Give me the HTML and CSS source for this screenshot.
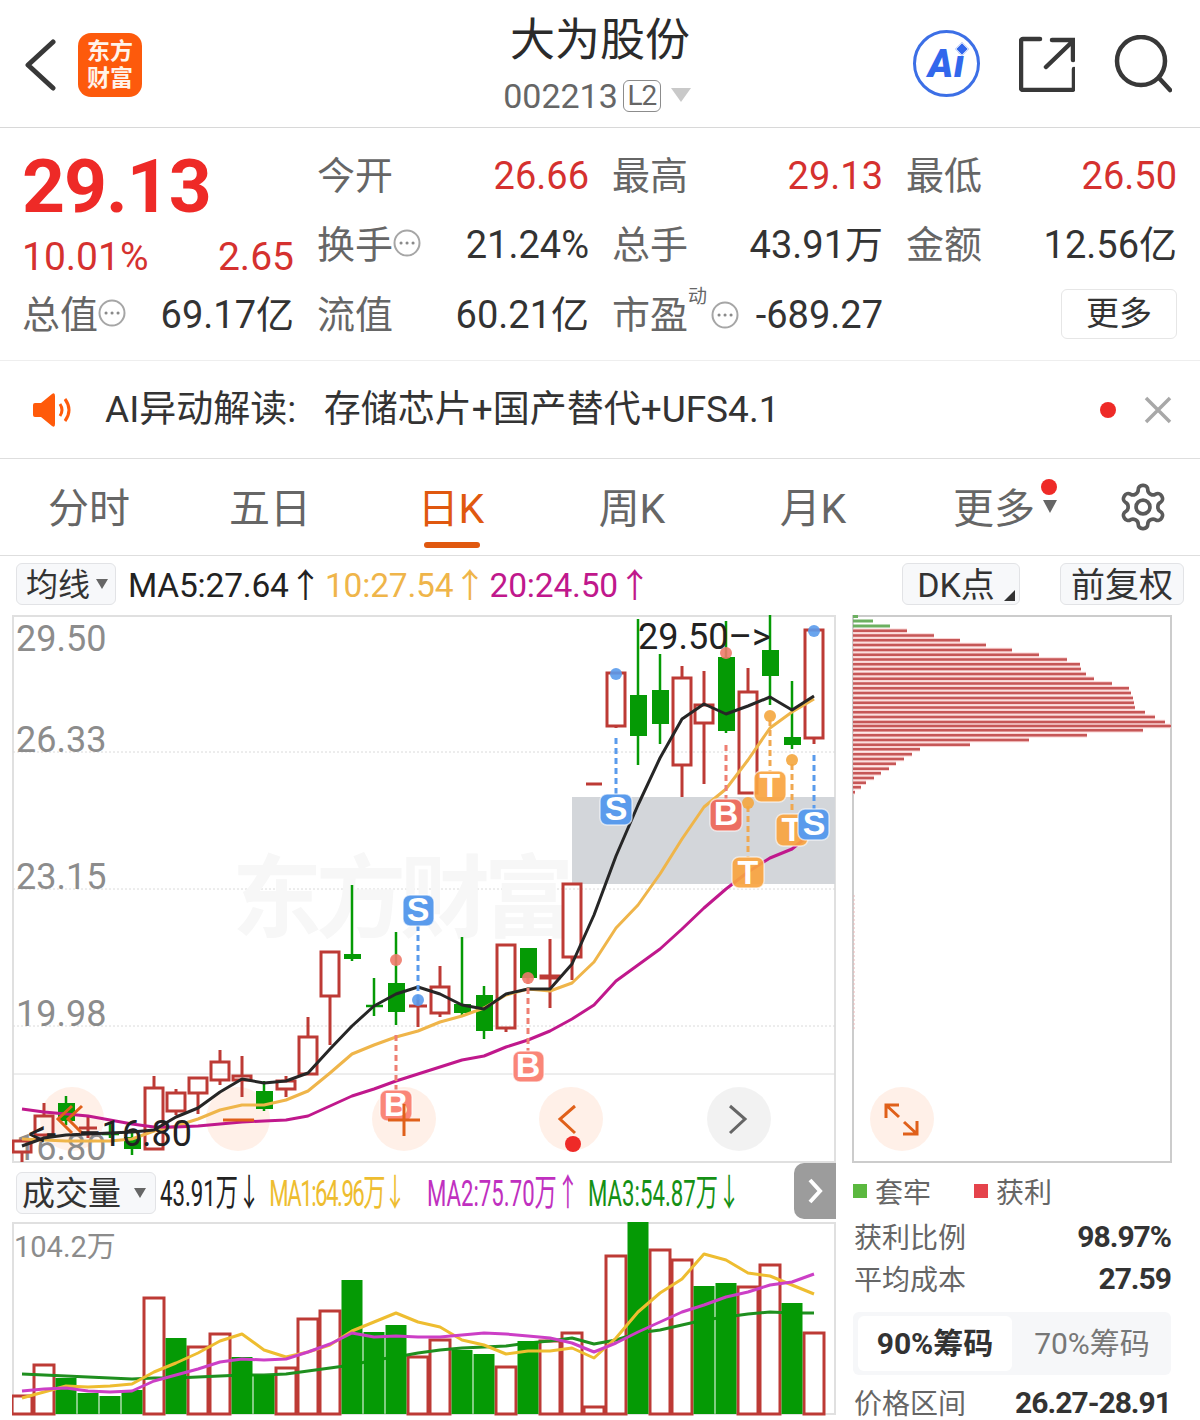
FILE: index.html
```html
<!DOCTYPE html>
<html lang="zh-CN">
<head>
    <meta charset="UTF-8">
    <meta name="viewport" content="width=device-width, initial-scale=1.0">
    <title>大为股份 002213</title>
    <link rel="stylesheet" href="styles.css">
</head>
<body>
    <header class="top-bar">
        <div class="top-left">
            <svg class="back-icon" viewBox="0 0 32 52"><path d="M29 3 L4 26 L29 49"/></svg>
            <div class="logo"><span>东方</span><span>财富</span></div>
        </div>
        <div class="top-title">
            <h1>大为股份</h1>
            <div class="top-code">002213<span class="l2-tag">L2</span><span class="tri-code"></span></div>
        </div>
        <div class="top-right">
            <div class="ai-btn"><span>Ai</span><i></i></div>
            <svg class="top-icon share" viewBox="0 0 56 56"><path d="M21 3H4a2 2 0 0 0-2 2v47a2 2 0 0 0 2 2h49a2 2 0 0 0 2-2V33M27 31 54 5M33 4H54V24"/></svg>
            <svg class="top-icon search" viewBox="0 0 58 58"><circle cx="27" cy="26" r="24"/><path d="M45 43 56 55"/></svg>
        </div>
    </header>

    <section class="stats">
        <div class="quote">
            <div class="price">29.13</div>
            <div class="change"><span>10.01%</span><span>2.65</span></div>
        </div>
        <div class="stat"><span class="lbl">今开</span><span class="val red">26.66</span></div>
        <div class="stat"><span class="lbl">最高</span><span class="val red">29.13</span></div>
        <div class="stat"><span class="lbl">最低</span><span class="val red">26.50</span></div>
        <div class="stat"><span class="lbl">换手<svg class="more-dot" viewBox="0 0 28 28"><circle cx="14" cy="14" r="12.5"/><path d="M8 14h.1M14 14h.1M20 14h.1"/></svg></span><span class="val">21.24%</span></div>
        <div class="stat"><span class="lbl">总手</span><span class="val">43.91万</span></div>
        <div class="stat"><span class="lbl">金额</span><span class="val">12.56亿</span></div>
        <div class="stat"><span class="lbl">总值<svg class="more-dot" viewBox="0 0 28 28"><circle cx="14" cy="14" r="12.5"/><path d="M8 14h.1M14 14h.1M20 14h.1"/></svg></span><span class="val">69.17亿</span></div>
        <div class="stat"><span class="lbl">流值</span><span class="val">60.21亿</span></div>
        <div class="stat"><span class="lbl">市盈<sup>动</sup><svg class="more-dot pe-dot" viewBox="0 0 28 28"><circle cx="14" cy="14" r="12.5"/><path d="M8 14h.1M14 14h.1M20 14h.1"/></svg></span><span class="val">-689.27</span></div>
        <div class="stat stat-end"><button class="more-btn">更多</button></div>
    </section>

    <section class="notice">
        <svg class="speaker" viewBox="0 0 42 34"><path class="cone" d="M1 12q0-2 2-2h6L20 1q3-2 3 2v28q0 4-3 2L9 24H3q-2 0-2-2z"/><path class="wave" d="M28 11q4 6 0 12M33 6q8 11 0 22"/></svg>
        <span class="notice-text">AI异动解读:&nbsp;&nbsp; 存储芯片+国产替代+UFS4.1</span>
        <i class="notice-dot"></i>
        <svg class="close" viewBox="0 0 28 28"><path d="M2 2 26 26M26 2 2 26"/></svg>
    </section>

    <nav class="tabs">
        <a>分时</a>
        <a>五日</a>
        <a class="active">日K</a>
        <a>周K</a>
        <a>月K</a>
        <a class="tab-more">更多<i class="tab-dot"></i><i class="tab-tri"></i></a>
        <svg class="gear" viewBox="0 0 24 24"><path d="M12.22 2h-.44a2 2 0 0 0-2 2v.18a2 2 0 0 1-1 1.73l-.43.25a2 2 0 0 1-2 0l-.15-.08a2 2 0 0 0-2.73.73l-.22.38a2 2 0 0 0 .73 2.73l.15.1a2 2 0 0 1 1 1.72v.51a2 2 0 0 1-1 1.74l-.15.09a2 2 0 0 0-.73 2.73l.22.38a2 2 0 0 0 2.73.73l.15-.08a2 2 0 0 1 2 0l.43.25a2 2 0 0 1 1 1.73V20a2 2 0 0 0 2 2h.44a2 2 0 0 0 2-2v-.18a2 2 0 0 1 1-1.73l.43-.25a2 2 0 0 1 2 0l.15.08a2 2 0 0 0 2.73-.73l.22-.39a2 2 0 0 0-.73-2.73l-.15-.08a2 2 0 0 1-1-1.74v-.5a2 2 0 0 1 1-1.74l.15-.09a2 2 0 0 0 .73-2.73l-.22-.38a2 2 0 0 0-2.73-.73l-.15.08a2 2 0 0 1-2 0l-.43-.25a2 2 0 0 1-1-1.73V4a2 2 0 0 0-2-2z"/><circle cx="12" cy="12" r="3.2"/></svg>
    </nav>

    <section class="ma-bar">
        <div class="pill pill-ma">均线<i class="tri-small"></i></div>
        <span class="ma-item c-black">MA5:27.64↑</span>
        <span class="ma-item c-yellow">10:27.54↑</span>
        <span class="ma-item c-pink">20:24.50↑</span>
        <div class="pill pill-dk">DK点<i class="corner"></i></div>
        <div class="pill pill-fq">前复权</div>
    </section>

    <main class="charts">
        <div class="chart-col">
            <svg class="kline" viewBox="12 615 824 548">
                <rect class="frame" x="13" y="616" width="822" height="546"/>
                <path class="grid-dot" d="M13 752H835M13 889H835M13 1026H835"/>
                <path class="grid-solid" d="M13 1074H835"/>
                <text class="watermark" x="232" y="930">东方财富</text>
                <rect class="zone" x="572" y="797" width="263" height="87"/>

                <circle class="round-btn" cx="72" cy="1119" r="32"/>
                <circle class="round-btn" cx="238" cy="1119" r="32"/>
                <circle class="round-btn" cx="404" cy="1119" r="32"/>
                <circle class="round-btn" cx="571" cy="1119" r="32"/>
                <circle class="round-btn grey" cx="739" cy="1119" r="32"/>

                <text class="axis" x="16" y="651">29.50</text>
                <text class="axis" x="16" y="752">26.33</text>
                <text class="axis" x="16" y="889">23.15</text>
                <text class="axis" x="16" y="1026">19.98</text>
                <text class="axis" x="16" y="1160">16.80</text>

                <!-- up candles -->
                <path class="up" d="M13 1141h18v11h-18zM22 1152v10M35 1116h18v19h-18zM44 1103v13M79 1128h18M88 1117v21M145 1088h18v61h-18zM154 1076v12M167 1093h18v18h-18zM176 1089v4M176 1111v4M189 1078h18v15h-18zM198 1093v21M211 1062h18v18h-18zM220 1050v12M220 1080v5M233 1076h18v4h-18zM242 1056v20M242 1080v17M277 1081h18v8h-18zM286 1076v5M286 1089v8M299 1037h18v37h-18zM308 1017v20M321 952h18v44h-18zM330 996v49M409 1006h18M418 999v28M431 987h18v26h-18zM440 966v21M440 1013v4M497 945h18v83h-18zM506 1028v4M541 976h18v2h-18zM550 939v69M563 884h18v73h-18zM572 957v23M586 784h16M607 673h18v53h-18zM616 726v2M673 678h18v87h-18zM682 666v12M682 765v32M695 705h18v18h-18zM704 671v34M704 723v61M739 692h18v101h-18zM748 668v24M805 630h18v108h-18zM814 738v6"/>
                <!-- down candles -->
                <path class="down-wick" d="M66 1096v29M110 1124v14M102 1134h17M132 1131v24M264 1081v30M352 885v76M374 978v38M366 1006h17M396 932v93M462 937v78M484 986v53M638 619v146M660 654v90M726 621v112M770 615v90M792 681v68"/>
                <path class="down" d="M58 1103h17v18h-17zM124 1137h17v12h-17zM256 1091h17v18h-17zM344 954h17v5h-17zM388 983h17v29h-17zM454 1004h17v9h-17zM476 995h17v36h-17zM520 948h17v30h-17zM630 695h17v41h-17zM652 690h17v34h-17zM718 657h17v74h-17zM762 650h17v26h-17zM784 737h17v8h-17z"/>

                <polyline class="ma ma10" points="22,1139 44,1140 66,1141 88,1141 110,1141 132,1139 154,1131 176,1126 198,1119 220,1110 242,1105 264,1105 286,1100 308,1091 330,1073 352,1054 374,1045 396,1037 418,1031 440,1022 462,1016 484,1008 506,995 528,989 550,991 572,983 594,962 616,928 638,905 660,874 682,839 704,807 726,789 748,760 770,728 792,712 814,699"/>
                <polyline class="ma ma20" points="22,1109 44,1112 66,1114 88,1116 110,1120 132,1124 154,1127 176,1127 198,1126 220,1124 242,1122 264,1121 286,1120 308,1116 330,1106 352,1096 374,1089 396,1081 418,1074 440,1067 462,1060 484,1056 506,1047 528,1040 550,1031 572,1019 594,1005 616,981 638,965 660,949 682,929 704,908 726,889 748,872 770,858 792,849 814,831"/>
                <polyline class="ma ma5" points="22,1146 44,1138 66,1135 88,1134 110,1133 132,1132 154,1130 176,1117 198,1108 220,1092 242,1079 264,1083 286,1081 308,1073 330,1049 352,1026 374,1006 396,994 418,987 440,994 462,1005 484,1009 506,994 528,989 550,989 572,964 594,915 616,856 638,805 660,758 682,719 704,704 726,714 748,706 770,697 792,710 814,696"/>

                <path class="dash c-s" d="M418 925V1000M616 738V795M814 755V810"/>
                <path class="dash c-b" d="M396 1035V1090M528 978V1052M726 745V800"/>
                <path class="dash c-t" d="M748 806V858M770 720V772M792 764V815"/>
                <circle class="dot d-b" cx="396" cy="960" r="6"/>
                <circle class="dot d-s" cx="418" cy="1000" r="6"/>
                <circle class="dot d-b" cx="528" cy="978" r="6"/>
                <circle class="dot d-s" cx="616" cy="674" r="6"/>
                <circle class="dot d-b" cx="726" cy="653" r="6"/>
                <circle class="dot d-t" cx="748" cy="803" r="6"/>
                <circle class="dot d-t" cx="770" cy="716" r="6"/>
                <circle class="dot d-t" cx="792" cy="760" r="6"/>
                <circle class="dot d-s" cx="814" cy="631" r="6"/>

                <g class="tag tag-s"><rect x="403" y="895" width="31" height="31" rx="7"/><text x="418" y="921">S</text></g>
                <g class="tag tag-b"><rect x="380" y="1090" width="32" height="31" rx="7"/><text x="396" y="1116">B</text></g>
                <g class="tag tag-b"><rect x="513" y="1051" width="31" height="31" rx="7"/><text x="528" y="1077">B</text></g>
                <g class="tag tag-s"><rect x="600" y="794" width="32" height="31" rx="7"/><text x="616" y="820">S</text></g>
                <g class="tag tag-b dark"><rect x="710" y="799" width="32" height="32" rx="7"/><text x="726" y="825">B</text></g>
                <g class="tag tag-t"><rect x="754" y="771" width="32" height="31" rx="7"/><text x="770" y="797">T</text></g>
                <g class="tag tag-t"><rect x="776" y="814" width="32" height="32" rx="7"/><text x="792" y="841">T</text></g>
                <g class="tag tag-s"><rect x="798" y="809" width="31" height="31" rx="7"/><text x="814" y="835">S</text></g>
                <g class="tag tag-t"><rect x="732" y="857" width="32" height="31" rx="7"/><text x="748" y="884">T</text></g>

                <path class="btn-ic" d="M82 1106 68 1119 82 1133M72 1106 58 1119 72 1133M223 1120H254M388 1120H420M404 1104V1136M575 1106 560 1119 575 1133"/>
                <path class="btn-ic grey" d="M730 1106 745 1119 730 1133"/>
                <circle class="red-dot" cx="573" cy="1144" r="8"/>

                <text class="mark" x="638" y="649">29.50–&gt;</text>
                <text class="mark" x="28" y="1146">&lt;-</text>
                <text class="mark end" x="192" y="1146">–16.80</text>
            </svg>

            <div class="vol-bar">
                <div class="pill pill-vol">成交量<i class="tri-small"></i></div>
                <div class="vol-values">
                    <span class="c-black">43.91万↓</span>
                    <span class="c-gold">MA1:64.96万↓</span>
                    <span class="c-purple">MA2:75.70万↑</span>
                    <span class="c-green">MA3:54.87万↓</span>
                </div>
                <div class="vol-next"><svg viewBox="0 0 16 28"><path d="M3 3 13 14 3 25"/></svg></div>
            </div>

            <svg class="volume" viewBox="12 1222 824 194">
                <rect class="frame" x="13" y="1223" width="822" height="191"/>
                <text class="vol-max" x="14" y="1257">104.2万</text>
                <path class="up" d="M12 1414V1396H32V1414zM34 1414V1365H54V1414zM144 1414V1298H164V1414zM188 1414V1347H208V1414zM210 1414V1334H230V1414zM276 1414V1368H296V1414zM298 1414V1319H318V1414zM320 1414V1311H340V1414zM408 1414V1357H428V1414zM430 1414V1340H450V1414zM496 1414V1367H516V1414zM540 1414V1341H560V1414zM562 1414V1333H582V1414zM584 1414V1407H604V1414zM606 1414V1256H626V1414zM650 1414V1250H670V1414zM672 1414V1260H692V1414zM738 1414V1287H758V1414zM760 1414V1265H780V1414zM804 1414V1333H824V1414z"/>
                <polyline class="vma vma3" points="22,1374 44,1375 66,1376 88,1377 110,1378 132,1379 154,1378 176,1378 198,1377 220,1376 242,1375 264,1375 286,1374 308,1371 330,1368 352,1365 374,1360 396,1357 418,1353 440,1350 462,1348 484,1347 506,1346 528,1343 550,1341 572,1338 594,1344 616,1340 638,1333 660,1330 682,1325 704,1320 726,1317 748,1314 770,1312 792,1313 814,1313"/>
                <path class="down" d="M55.5 1414V1378h21V1414zM77.5 1414V1393h21V1414zM99.5 1414V1396h21V1414zM121.5 1414V1390h21V1414zM165.5 1414V1338h21V1414zM231.5 1414V1357h21V1414zM253.5 1414V1375h21V1414zM341.5 1414V1280h21V1414zM363.5 1414V1332h21V1414zM385.5 1414V1325h21V1414zM451.5 1414V1350h21V1414zM473.5 1414V1354h21V1414zM517.5 1414V1341h21V1414zM627.5 1414V1222h21V1414zM693.5 1414V1286h21V1414zM715.5 1414V1283h21V1414zM781.5 1414V1303h21V1414z"/>
                <polyline class="vma vma1" points="22,1398 44,1392 66,1386 88,1387 110,1386 132,1384 154,1372 176,1363 198,1353 220,1341 242,1334 264,1350 286,1357 308,1352 330,1345 352,1331 374,1322 396,1313 418,1322 440,1327 462,1340 484,1345 506,1354 528,1351 550,1351 572,1348 594,1358 616,1338 638,1312 660,1293 682,1279 704,1254 726,1260 748,1273 770,1276 792,1285 814,1294"/>
                <polyline class="vma vma2" points="22,1391 44,1389 66,1388 88,1391 110,1392 132,1391 154,1381 176,1375 198,1369 220,1362 242,1359 264,1360 286,1359 308,1352 330,1344 352,1333 374,1337 396,1336 418,1337 440,1337 462,1335 484,1333 506,1334 528,1336 550,1338 572,1343 594,1352 616,1343 638,1332 660,1322 682,1312 704,1305 726,1297 748,1292 770,1285 792,1282 814,1274"/>
            </svg>
        </div>

        <aside class="chip-col">
            <svg class="chips" viewBox="852 615 320 548">
                <rect class="chip-frame" x="853" y="616" width="318" height="546"/>
                <path class="chip-edge" d="M854 895V1030"/>
                <path class="chip-halo" d="M853 630.7h54M853 635.5h81M853 640.3h107M853 645h133M853 650h159M853 654.7h186M853 659.5h214M853 664.3h227M853 669h228M853 674h233M853 678.7h241M853 683.5h259M853 688.3h276M853 693h278M853 698h280M853 702.7h281M853 707.5h282M853 712.3h292M853 717h302M853 722h312M853 726h318M853 730.3h290M853 735.3h234M853 740h176M853 744.7h117M853 749.3h67M853 754.3h59M853 759h51M853 763.7h43M853 768.7h36M853 773.3h28M853 778h21M853 782.7h13M853 787.3h8M853 792.3h2"/>
                <path class="chip-red" d="M853 630.7h54M853 635.5h81M853 640.3h107M853 645h133M853 650h159M853 654.7h186M853 659.5h214M853 664.3h227M853 669h228M853 674h233M853 678.7h241M853 683.5h259M853 688.3h276M853 693h278M853 698h280M853 702.7h281M853 707.5h282M853 712.3h292M853 717h302M853 722h312M853 726h318M853 730.3h290M853 735.3h234M853 740h176M853 744.7h117M853 749.3h67M853 754.3h59M853 759h51M853 763.7h43M853 768.7h36M853 773.3h28M853 778h21M853 782.7h13M853 787.3h8M853 792.3h2"/>
                <path class="chip-green" d="M853 616.5h5M853 621h20M853 626h37"/>
                <circle class="round-btn" cx="902" cy="1119" r="32"/>
                <path class="btn-ic" d="M886 1118V1105H899M886 1105 899 1117M903 1134H917V1121M917 1134 904 1122"/>
            </svg>
            <div class="legend">
                <i class="sq sq-green"></i><span>套牢</span>
                <i class="sq sq-red"></i><span>获利</span>
            </div>
            <div class="chip-row"><span>获利比例</span><b>98.97%</b></div>
            <div class="chip-row"><span>平均成本</span><b>27.59</b></div>
            <div class="chip-switch">
                <span class="on">90%筹码</span>
                <span>70%筹码</span>
            </div>
            <div class="chip-row"><span>价格区间</span><b>26.27-28.91</b></div>
        </aside>
    </main>
</body>
</html>
```
FILE: styles.css
```css
* {
    box-sizing: border-box;
}
html, body {
    margin: 0;
    padding: 0;
}
body {
    width: 1200px;
    height: 1420px;
    overflow: hidden;
    background-color: #ffffff;
    color: #333333;
    font-family: Roboto, "Noto Sans CJK SC", sans-serif;
}
i {
    display: block;
}

/* top bar */
.top-bar {
    display: grid;
    grid-template-columns: 1fr auto 1fr;
    height: 128px;
    border-bottom: 1px solid #d8d8d8;
}
.top-left {
    display: flex;
    align-items: center;
    padding: 3px 0 0 24px;
    gap: 22px;
}
.back-icon {
    width: 32px;
    height: 52px;
    fill: none;
    stroke: #383838;
    stroke-width: 5;
    stroke-linecap: round;
    stroke-linejoin: round;
}
.logo {
    width: 64px;
    height: 64px;
    border-radius: 13px;
    background-color: #fd5a0c;
    color: #fff3ea;
    display: flex;
    flex-direction: column;
    align-items: center;
    justify-content: center;
    font-size: 23px;
    font-weight: 700;
    line-height: 27px;
}
.top-title {
    display: flex;
    flex-direction: column;
    align-items: center;
    padding-top: 12px;
}
.top-title h1 {
    margin: 0;
    font-size: 45px;
    font-weight: 400;
    line-height: 58px;
    color: #2b2b2b;
}
.top-code {
    display: flex;
    align-items: center;
    margin-top: 6px;
    padding-right: 6px;
    font-size: 34px;
    line-height: 40px;
    color: #666666;
}
.l2-tag {
    width: 38px;
    height: 32px;
    margin-left: 5px;
    border: 1.5px solid #8c8c8c;
    border-radius: 6px;
    font-size: 28px;
    line-height: 29px;
    text-align: center;
    letter-spacing: -1px;
}
.tri-code {
    width: 0;
    height: 0;
    margin-left: 10px;
    margin-top: -2px;
    border-left: 10px solid transparent;
    border-right: 10px solid transparent;
    border-top: 14px solid #c9c9c9;
}
.top-right {
    display: flex;
    justify-content: flex-end;
    align-items: center;
    gap: 39px;
    padding-right: 28px;
}
.ai-btn {
    position: relative;
    width: 67px;
    height: 67px;
    border: 3.5px solid #3c6fe6;
    border-radius: 50%;
    display: flex;
    align-items: center;
    justify-content: center;
    color: #3267ec;
    font-size: 38px;
    font-weight: 900;
    font-style: italic;
    line-height: 60px;
    letter-spacing: 1px;
}
.ai-btn i {
    position: absolute;
    left: 41px;
    top: 11px;
    width: 10px;
    height: 10px;
    background-color: #3267ec;
    border: 1px solid #ffffff;
    transform: rotate(45deg);
}
.top-icon {
    fill: none;
    stroke: #383838;
    stroke-width: 4.5;
    stroke-linecap: round;
}
.share {
    width: 56px;
    height: 56px;
}
.search {
    width: 58px;
    height: 58px;
}

/* quote numbers */
.stats {
    display: grid;
    grid-template-columns: 272px 272px 271px 271px;
    grid-template-rows: repeat(3, 69.5px);
    column-gap: 23px;
    height: 233px;
    padding: 13px 0 0 22px;
    border-bottom: 1px solid #eeeeee;
}
.quote {
    grid-row: span 2;
}
.price {
    height: 90px;
    font-size: 75px;
    font-weight: 700;
    line-height: 90px;
    letter-spacing: -1px;
    color: #ee2a27;
}
.change {
    display: flex;
    justify-content: space-between;
    margin-top: 2px;
    font-size: 39px;
    line-height: 49px;
    color: #d5312f;
}
.stat {
    display: flex;
    align-items: center;
    justify-content: space-between;
    font-size: 38px;
    line-height: 46px;
}
.stat-end {
    justify-content: flex-end;
}
.lbl {
    display: flex;
    align-items: center;
    position: relative;
    color: #666666;
}
.lbl sup {
    position: absolute;
    left: 76px;
    top: -5px;
    font-size: 19px;
    line-height: 20px;
}
.val {
    color: #333333;
}
.val.red {
    color: #d5312f;
}
.more-dot {
    width: 28px;
    height: 28px;
    margin-top: -4px;
    fill: none;
    stroke: #a6a6a6;
    stroke-width: 2;
    stroke-linecap: round;
}
.more-dot path {
    stroke: #8a8a8a;
    stroke-width: 3;
}
.pe-dot {
    margin-left: 23px;
    margin-top: 0;
}
.more-btn {
    width: 116px;
    height: 50px;
    margin-top: -2px;
    padding: 0;
    background-color: #ffffff;
    border: 1px solid #e6e6e6;
    border-radius: 6px;
    color: #333333;
    font-family: inherit;
    font-size: 33px;
    line-height: 46px;
}

/* notice */
.notice {
    display: flex;
    align-items: center;
    height: 98px;
    padding-left: 32px;
    border-bottom: 1px solid #dedede;
}
.speaker {
    width: 42px;
    height: 34px;
}
.cone {
    fill: #ff5a0a;
}
.wave {
    fill: none;
    stroke: #ff5a0a;
    stroke-width: 3;
}
.notice-text {
    margin-left: 31px;
    font-size: 37px;
    line-height: 48px;
    white-space: nowrap;
}
.notice-dot {
    width: 16px;
    height: 16px;
    margin-left: auto;
    border-radius: 50%;
    background-color: #ee2a27;
}
.close {
    width: 28px;
    height: 28px;
    margin: 0 28px 0 28px;
    fill: none;
    stroke: #a8a8a8;
    stroke-width: 3.5;
}

/* period tabs */
.tabs {
    display: grid;
    grid-template-columns: repeat(6, 181px) 1fr;
    align-items: center;
    height: 97px;
    border-bottom: 1px solid #dedede;
    font-size: 41px;
    color: #666666;
}
.tabs a {
    position: relative;
    height: 96px;
    padding-right: 3px;
    line-height: 100px;
    text-align: center;
}
.tabs a.active {
    color: #e0580f;
}
.tabs a.active::after {
    content: "";
    position: absolute;
    left: 62px;
    bottom: 7px;
    width: 56px;
    height: 6px;
    border-radius: 3px;
    background-color: #e0580f;
}
.tab-dot {
    position: absolute;
    left: 136px;
    top: 20px;
    width: 16px;
    height: 16px;
    border-radius: 50%;
    background-color: #ee2a27;
}
.tab-tri {
    position: absolute;
    left: 138px;
    top: 41px;
    width: 0;
    height: 0;
    border-left: 7px solid transparent;
    border-right: 7px solid transparent;
    border-top: 13px solid #666666;
}
.gear {
    width: 52px;
    height: 52px;
    margin-left: 31px;
    fill: none;
    stroke: #5a5a5a;
    stroke-width: 1.7;
}

/* moving average row */
.ma-bar {
    display: flex;
    align-items: center;
    height: 59px;
    padding: 0 16px 3px;
    font-size: 33.5px;
    white-space: nowrap;
}
.pill {
    position: relative;
    display: flex;
    align-items: center;
    justify-content: center;
    height: 42px;
    padding-bottom: 4px;
    background-color: #f7f8fa;
    border: 1px solid #e2e3e6;
    border-radius: 6px;
    font-size: 32px;
    color: #333333;
}
.pill-ma {
    width: 100px;
    margin-right: 12px;
    justify-content: flex-start;
    padding-left: 9px;
}
.ma-item {
    margin-right: 3px;
    margin-bottom: 4px;
    letter-spacing: -0.2px;
}
.pill-dk {
    width: 118px;
    margin-left: auto;
    padding-right: 10px;
    font-size: 34px;
}
.pill-fq {
    width: 124px;
    margin-left: 40px;
    font-size: 34px;
}
.tri-small {
    width: 0;
    height: 0;
    margin-left: 6px;
    margin-top: 4px;
    border-left: 6px solid transparent;
    border-right: 6px solid transparent;
    border-top: 10px solid #666666;
}
.corner {
    position: absolute;
    right: 4px;
    bottom: 3px;
    width: 0;
    height: 0;
    border-left: 11px solid transparent;
    border-bottom: 11px solid #333333;
}
.c-black {
    color: #222222;
}
.c-yellow {
    color: #efb54a;
}
.c-pink {
    color: #c0188c;
}
.c-gold {
    color: #eebd30;
}
.c-purple {
    color: #c030c0;
}
.c-green {
    color: #159015;
}

/* charts */
.charts {
    display: grid;
    grid-template-columns: 824px 320px;
    column-gap: 16px;
    padding-left: 12px;
}
.kline {
    display: block;
    width: 824px;
    height: 548px;
}
.frame {
    fill: none;
    stroke: #e0e0e0;
    stroke-width: 2;
}
.grid-dot {
    fill: none;
    stroke: #dadada;
    stroke-dasharray: 2 2;
}
.grid-solid {
    fill: none;
    stroke: #dcdcdc;
}
.watermark {
    font-size: 90px;
    font-weight: 700;
    letter-spacing: -6px;
    fill: #f7f7f7;
}
.zone {
    fill: #d3d6da;
}
.round-btn {
    fill: #fb6a20;
    fill-opacity: 0.1;
}
.round-btn.grey {
    fill: #000000;
    fill-opacity: 0.05;
}
.axis {
    font-size: 36px;
    fill: #8c8c8c;
}
.up {
    fill: none;
    stroke: #bd3a35;
    stroke-width: 3;
}
.down {
    fill: #059a05;
}
.down-wick {
    fill: none;
    stroke: #059a05;
    stroke-width: 2.5;
}
.ma {
    fill: none;
    stroke-width: 3;
    stroke-linejoin: round;
}
.ma5 {
    stroke: #262626;
}
.ma10 {
    stroke: #efb54a;
}
.ma20 {
    stroke: #c0188c;
}
.dash {
    fill: none;
    stroke-width: 3;
    stroke-dasharray: 6 4;
}
.dash.c-s {
    stroke: #5a9bec;
}
.dash.c-b {
    stroke: #ee7f72;
}
.dash.c-t {
    stroke: #f0a850;
}
.dot {
    fill-opacity: 0.9;
}
.d-s {
    fill: #5a9bec;
}
.d-b {
    fill: #ee7a6a;
}
.d-t {
    fill: #f4a63e;
}
.tag rect {
    stroke: #ffffff;
    stroke-opacity: 0.6;
    stroke-width: 1.5;
}
.tag text {
    font-family: "Liberation Sans", sans-serif;
    font-size: 34px;
    font-weight: 700;
    text-anchor: middle;
    fill: #ffffff;
}
.tag-s rect {
    fill: #5a9bec;
}
.tag-b rect {
    fill: #fa8678;
}
.tag-b.dark rect {
    fill: #ec6f62;
}
.tag-t rect {
    fill: #f9a440;
    fill-opacity: 0.92;
}
.btn-ic {
    fill: none;
    stroke: #e0601a;
    stroke-width: 3;
}
.btn-ic.grey {
    stroke: #666666;
}
.red-dot {
    fill: #ee2a27;
}
.mark {
    font-size: 36px;
    fill: #222222;
}
.mark.end {
    text-anchor: end;
}

/* volume */
.vol-bar {
    display: flex;
    align-items: center;
    height: 59px;
    padding-left: 4px;
}
.pill-vol {
    flex: none;
    width: 140px;
    font-size: 33px;
    justify-content: flex-start;
    padding-left: 5px;
}
.pill-vol .tri-small {
    margin-left: 13px;
}
.vol-values {
    flex: none;
    display: flex;
    gap: 15px;
    width: 578px;
    margin-left: 4px;
    margin-bottom: 6px;
    font-size: 37px;
    white-space: nowrap;
    transform: scaleX(0.6);
    transform-origin: left center;
}
.vol-values .c-gold {
    margin-right: 22px;
    letter-spacing: -2.5px;
}
.vol-next {
    display: flex;
    align-items: center;
    justify-content: center;
    flex: none;
    width: 42px;
    height: 56px;
    margin-left: auto;
    margin-top: -3px;
    background-color: #9c9c9c;
    border-radius: 10px 0 0 10px;
}
.vol-next svg {
    width: 16px;
    height: 28px;
    fill: none;
    stroke: #ffffff;
    stroke-width: 4;
}
.volume {
    display: block;
    width: 824px;
    height: 194px;
}
.vol-max {
    font-size: 29px;
    fill: #8c8c8c;
}
.vma {
    fill: none;
    stroke-width: 3;
    stroke-linejoin: round;
}
.vma1 {
    stroke: #eebd30;
}
.vma2 {
    stroke: #cc3fc6;
}
.vma3 {
    stroke: #1f8f1f;
}

/* chip distribution */
.chips {
    display: block;
    width: 320px;
    height: 548px;
}
.chip-frame {
    fill: none;
    stroke: #cccccc;
    stroke-width: 2;
}
.chip-edge {
    stroke: #eab8b8;
    stroke-dasharray: 2 2;
    fill: none;
}
.chip-halo {
    fill: none;
    stroke: #f9d3d3;
    stroke-width: 4.4;
}
.chip-red {
    fill: none;
    stroke: #c65757;
    stroke-width: 2.4;
}
.chip-green {
    fill: none;
    stroke: #6cb060;
    stroke-width: 3;
}
.legend {
    display: flex;
    align-items: center;
    height: 52px;
    padding: 4px 0 0 1px;
    font-size: 28px;
    color: #666666;
}
.sq {
    width: 14px;
    height: 14px;
    margin-right: 8px;
}
.sq-green {
    background-color: #5bb83f;
}
.sq-red {
    margin-left: 43px;
    background-color: #e5434b;
}
.chip-row {
    display: flex;
    align-items: center;
    justify-content: space-between;
    width: 319px;
    height: 42px;
    padding-left: 2px;
    font-size: 28px;
    color: #666666;
}
.chip-row b {
    font-size: 30px;
    font-weight: 700;
    letter-spacing: -1px;
    color: #333333;
}
.chip-switch {
    display: flex;
    align-items: center;
    width: 318px;
    height: 63px;
    margin: 13px 0 6px 1px;
    padding: 0 5px;
    background-color: #f6f7f9;
    border-radius: 6px;
    font-size: 30px;
    color: #777777;
}
.chip-switch span {
    flex: none;
    width: 148px;
    height: 55px;
    line-height: 55px;
    text-align: center;
}
.chip-switch span + span {
    margin-left: 6px;
}
.chip-switch .on {
    width: 154px;
    background-color: #ffffff;
    border-radius: 6px;
    font-weight: 700;
    color: #333333;
}
```
